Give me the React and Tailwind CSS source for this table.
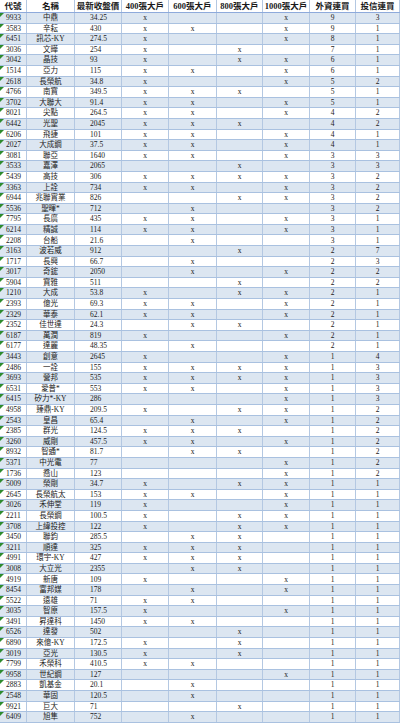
const rows = [
  ["9933", "中鼎", "34.25", "x..x", 9, 3],
  ["3583", "辛耘", "430", "xx.x", 9, 1],
  ["6451", "訊芯-KY", "274.5", "x..x", 8, 1],
  ["3036", "文曄", "254", "x.x.", 7, 1],
  ["3042", "晶技", "93", "x.xx", 6, 1],
  ["1514", "亞力", "115", "xx.x", 6, 1],
  ["2618", "長榮航", "34.8", "x..x", 5, 2],
  ["4766", "南寶", "349.5", "xxx.", 5, 1],
  ["3702", "大聯大", "91.4", "xx.x", 5, 1],
  ["8021", "尖點", "264.5", "xx.x", 4, 2],
  ["6442", "光聖", "2045", "xxx.", 4, 2],
  ["6206", "飛捷", "101", "xx.x", 4, 1],
  ["2027", "大成鋼", "37.5", "xx.x", 4, 1],
  ["3081", "聯亞", "1640", "xx.x", 3, 3],
  ["3533", "嘉澤", "2065", "..x.", 3, 3],
  ["5439", "高技", "306", "xxxx", 3, 2],
  ["3363", "上詮", "734", "xx.x", 3, 2],
  ["6944", "兆聯實業", "826", "..xx", 3, 2],
  ["5536", "聖暉*", "712", ".x..", 3, 2],
  ["7795", "長廣", "435", "xx.x", 3, 1],
  ["6214", "精誠", "114", "xx.x", 3, 1],
  ["2208", "台船", "21.6", ".x..", 3, 1],
  ["3163", "波若威", "912", "..x.", 2, 7],
  ["1717", "長興", "66.7", ".x..", 2, 3],
  ["3017", "奇鋐", "2050", ".x.x", 2, 2],
  ["5904", "寶雅", "511", "..x.", 2, 2],
  ["1210", "大成", "53.8", "x.xx", 2, 1],
  ["2393", "億光", "69.3", "xx.x", 2, 1],
  ["2329", "華泰", "62.1", "xx.x", 2, 1],
  ["2352", "佳世達", "24.3", ".xx.", 2, 1],
  ["6187", "萬潤", "819", "x..x", 2, 1],
  ["6177", "達麗", "48.35", ".x..", 2, 1],
  ["3443", "創意", "2645", "x..x", 1, 4],
  ["2486", "一詮", "155", "xxxx", 1, 3],
  ["3693", "營邦", "535", "xxxx", 1, 3],
  ["6531", "愛普*", "553", "xx.x", 1, 3],
  ["6415", "矽力*-KY", "286", "...x", 1, 3],
  ["4958", "臻鼎-KY", "209.5", "x.xx", 1, 2],
  ["2543", "皇昌", "65.4", ".x.x", 1, 2],
  ["2385", "群光", "124.5", "xxx.", 1, 2],
  ["3260", "威剛", "457.5", "xx.x", 1, 2],
  ["8932", "智通*", "81.7", ".xx.", 1, 2],
  ["5371", "中光電", "77", "...x", 1, 2],
  ["1736", "喬山", "123", "...x", 1, 2],
  ["5009", "榮剛", "34.7", "x.xx", 1, 1],
  ["2645", "長榮航太", "153", "xx.x", 1, 1],
  ["3026", "禾伸堂", "119", "x..x", 1, 1],
  ["2211", "長榮鋼", "100.5", "x.xx", 1, 1],
  ["3708", "上緯投控", "122", "x.xx", 1, 1],
  ["3450", "聯鈞", "285.5", ".xx.", 1, 1],
  ["3211", "順達", "325", "xxx.", 1, 1],
  ["4991", "環宇-KY", "427", "xxx.", 1, 1],
  ["3008", "大立光", "2355", ".xx.", 1, 1],
  ["4919", "新唐", "109", "x..x", 1, 1],
  ["8454", "富邦媒", "178", ".x.x", 1, 1],
  ["5522", "遠雄", "71", "xx..", 1, 1],
  ["3035", "智原", "157.5", "x..x", 1, 1],
  ["3491", "昇達科", "1450", "xx..", 1, 1],
  ["6526", "達發", "502", "..x.", 1, 1],
  ["6890", "來億-KY", "172.5", "x.x.", 1, 1],
  ["3019", "亞光", "130.5", "x.x.", 1, 1],
  ["7799", "禾榮科", "410.5", "xx..", 1, 1],
  ["9958", "世紀鋼", "127", "...x", 1, 1],
  ["2883", "凱基金", "20.1", ".x..", 1, 1],
  ["2548", "華固", "120.5", ".x..", 1, 1],
  ["9921", "巨大", "71", "..x.", 1, 1],
  ["6409", "旭隼", "752", ".x..", 1, 1],
];

const headers = ["代號", "名稱", "最新收盤價", "400張大戶", "600張大戶", "800張大戶", "1000張大戶", "外資連買", "投信連買"];

const grid = "grid grid-cols-[27px_48px_47px_47px_48px_46px_47px_46px_44px]";
const cell = "border-r border-[#b4c8e2] flex items-center leading-none";

export default function App() {
  return (
    <div className="w-[400px] h-[726px] bg-white overflow-hidden text-[#1a1a1a] font-['Liberation_Serif','Noto_Sans_CJK_TC',serif]">
      <div className={`${grid} h-[13px] border-b border-[#8eaadb] text-[8.5px] font-bold`}>
        {headers.map((h) => (
          <div key={h} className={`${cell} justify-center`}>
            {h}
          </div>
        ))}
      </div>
      {rows.map(([code, name, price, marks, f, t], i) => (
        <div
          key={code}
          className={`${grid} h-[10.6px] border-b border-[#a9c1e0] text-[7.5px] ${i % 2 === 0 ? "bg-[#dce6f1]" : "bg-white"}`}
        >
          <div className={`${cell} relative pl-[6px]`}>
            <span className="absolute left-0 top-0 w-0 h-0 border-t-[4px] border-r-[4px] border-t-[#2e8b2e] border-r-transparent" />
            {code}
          </div>
          <div className={`${cell} justify-center`}>{name}</div>
          <div className={`${cell} pl-[15px]`}>{price}</div>
          {marks.split("").map((m, j) => (
            <div key={j} className={`${cell} justify-center`}>
              {m === "x" ? "x" : ""}
            </div>
          ))}
          <div className={`${cell} justify-center`}>{f}</div>
          <div className={`${cell} justify-center`}>{t}</div>
        </div>
      ))}
    </div>
  );
}
